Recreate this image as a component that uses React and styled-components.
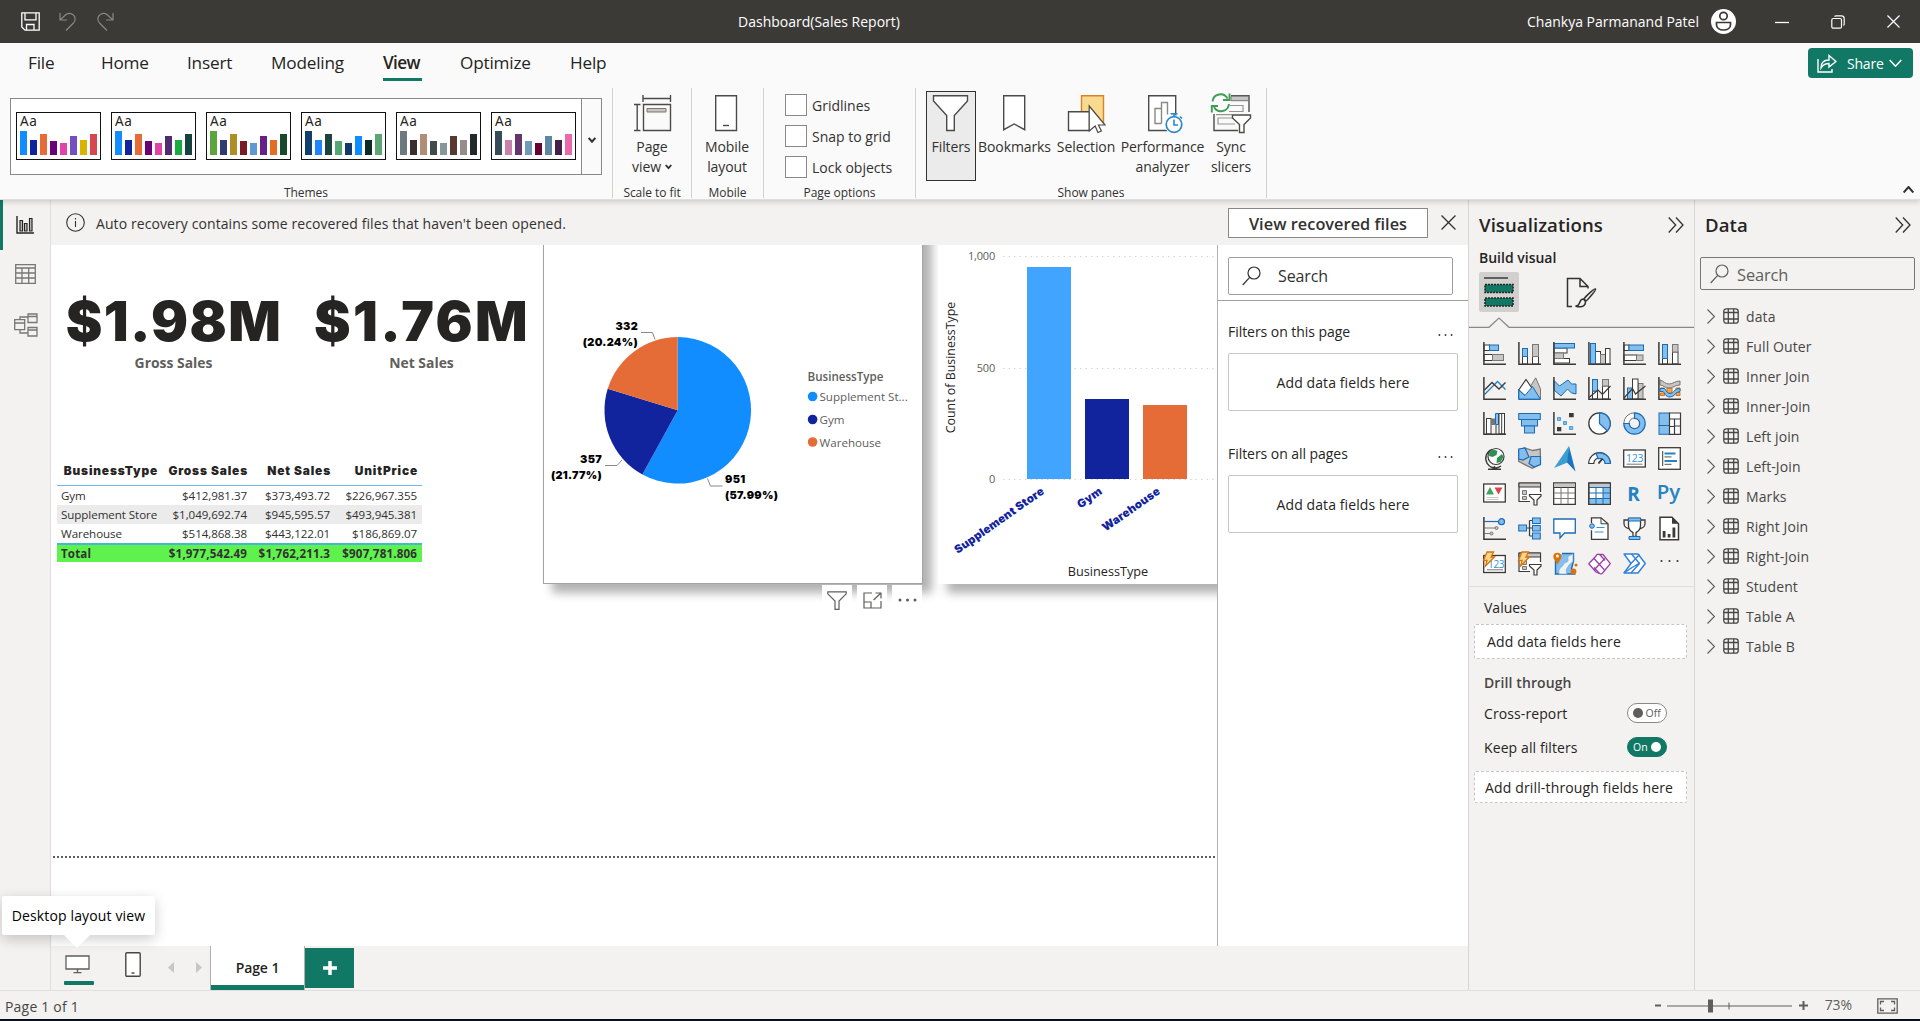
import React from "react";
import styled, { createGlobalStyle, css } from "styled-components";

const UI = `"Open Sans", "Noto Sans", sans-serif`;
const BLACK = `"Inter", "Liberation Sans", sans-serif`;
const GREEN = "#117865";

const Global = createGlobalStyle`
  * { box-sizing: border-box; }
  html, body { margin: 0; padding: 0; }
  body { font-family: ${UI}; color: #252423; font-size: 14px; overflow: hidden; }
  svg { display: block; flex: none; }
  svg text { font-family: ${UI}; }
`;

const Window = styled.div`
  width: 1920px;
  height: 1021px;
  display: flex;
  flex-direction: column;
  background: #f3f2f1;
  overflow: hidden;
`;

/* ---------- title bar ---------- */
const TitleBar = styled.header`
  height: 43px;
  flex: none;
  background: #3b3a37;
  color: #fff;
  display: grid;
  grid-template-columns: 1fr auto 1fr;
  align-items: center;
  font-size: 14px;
  letter-spacing: 0;
`;
const QuickAccess = styled.div`
  display: flex;
  align-items: center;
  gap: 19px;
  padding-left: 21px;
`;
const DocTitle = styled.div`
  padding-right: 282px;
  white-space: nowrap;
`;
const Account = styled.div`
  display: flex;
  align-items: center;
  justify-content: flex-end;
  padding-right: 20px;
  white-space: nowrap;
`;
const Avatar = styled.div`
  margin: 0 39px 0 12px;
`;
const WinButtons = styled.div`
  display: flex;
  align-items: center;
  gap: 42px;
`;

/* ---------- ribbon ---------- */
const Ribbon = styled.div`
  height: 157px;
  flex: none;
  background: #fafafa;
  border-bottom: 1px solid #e1dfdd;
  box-shadow: 0 2px 5px rgba(0, 0, 0, 0.16);
  position: relative;
  z-index: 3;
  display: flex;
  flex-direction: column;
`;
const TabRow = styled.nav`
  height: 45px;
  flex: none;
  display: flex;
  align-items: flex-start;
  justify-content: space-between;
  padding: 5px 7px 0 28px;
`;
const Tabs = styled.div`
  display: flex;
`;
const Tab = styled.div`
  width: ${(p) => p.$w}px;
  margin-right: ${(p) => p.$gap}px;
  height: 33px;
  padding-top: 3px;
  font-size: 17.2px;
  line-height: 24px;
  white-space: nowrap;
  letter-spacing: ${(p) => (p.$active ? "-0.6px" : "-0.2px")};
  font-weight: ${(p) => (p.$active ? 600 : 400)};
  border-bottom: 3px solid ${(p) => (p.$active ? GREEN : "transparent")};
`;
const ShareButton = styled.button`
  width: 105px;
  height: 30px;
  border: 0;
  border-radius: 4px;
  background: ${GREEN};
  color: #fff;
  font: 14px ${UI};
  letter-spacing: -0.2px;
  display: flex;
  align-items: center;
  padding: 0 10px 0 9px;
  gap: 9px;
  span { margin: 0 -4px 0 1px; }
`;
const Groups = styled.div`
  display: flex;
  height: 110px;
`;
const Group = styled.section`
  width: ${(p) => p.$w}px;
  border-right: 1px solid #d2d0ce;
  display: flex;
  flex-direction: column;
  align-items: center;
`;
const GroupBody = styled.div`
  height: 96px;
  width: 100%;
  display: flex;
  justify-content: ${(p) => p.$justify || "center"};
  padding: ${(p) => p.$pad || "0"};
`;
const GroupLabel = styled.div`
  font-size: 12px;
  line-height: 14px;
  height: 14px;
  flex: none;
  margin: 1px 0 -1px;
  padding-top: 1px;
  letter-spacing: -0.05px;
  white-space: nowrap;
  color: #323130;
`;
const Gallery = styled.div`
  width: 592px;
  height: 77px;
  border: 1px solid #8a8886;
  background: #fff;
  display: flex;
`;
const GalleryList = styled.div`
  flex: 1;
  display: flex;
  gap: 10px;
  padding: 13px 0 0 5px;
`;
const GalleryMore = styled.div`
  width: 20px;
  border-left: 1px solid #8a8886;
  background: #fafafa;
  display: flex;
  align-items: center;
  justify-content: center;
  padding-top: 6px;
`;
const Thumb = styled.div`
  width: 85px;
  height: 48px;
  border: 1px solid #111;
  background: #fff;
  padding: 2px 3px 4px;
  display: flex;
  flex-direction: column;
  justify-content: space-between;
`;
const ThumbText = styled.div`
  font-family: "Noto Sans", ${UI};
  font-size: 13.5px;
  line-height: 13px;
  height: 14px;
  letter-spacing: 0.6px;
  font-weight: 400;
`;
const ThumbBars = styled.div`
  display: flex;
  gap: 3px;
  align-items: flex-end;
`;
const ThumbBar = styled.i`
  width: 7px;
  height: ${(p) => p.$h}px;
  background: ${(p) => p.$c};
`;
const BigButton = styled.div`
  width: ${(p) => p.$w}px;
  height: 90px;
  display: flex;
  flex-direction: column;
  align-items: center;
  text-align: center;
  border: 1px solid transparent;
  font-size: 14px;
  line-height: 20px;
  letter-spacing: -0.1px;
  white-space: nowrap;
  color: #323130;
  ${(p) => p.$on && css`border-color: #323130; background: #ebebeb;`}
  svg.big { margin-bottom: 5px; overflow: visible; }
`;
const InlineLabel = styled.span`
  display: inline-flex;
  align-items: center;
  gap: 4px;
`;
const CheckList = styled.div`
  display: flex;
  flex-direction: column;
  gap: 11px;
  padding-top: 7px;
`;
const Check = styled.label`
  display: flex;
  align-items: center;
  gap: 5px;
  height: 20px;
  font-size: 14px;
  letter-spacing: 0;
  white-space: nowrap;
  color: #323130;
  &::before {
    content: "";
    width: 20px;
    height: 20px;
    border: 1px solid #8a8886;
    background: #fff;
  }
`;
const Collapse = styled.div`
  margin-left: auto;
  align-self: flex-end;
  padding: 0 6px 5px 0;
`;

/* ---------- main area ---------- */
const Main = styled.div`
  height: 790px;
  flex: none;
  display: flex;
`;
const Rail = styled.aside`
  width: 51px;
  border-right: 1px solid #e1dfdd;
  display: flex;
  flex-direction: column;
`;
const RailItem = styled.div`
  height: ${(p) => p.$h || 50}px;
  border-left: 3px solid ${(p) => (p.$on ? GREEN : "transparent")};
  display: flex;
  align-items: center;
  padding-left: ${(p) => p.$pad || 12}px;
`;
const Center = styled.div`
  width: 1417px;
  display: flex;
  flex-direction: column;
`;
const Notice = styled.div`
  height: 45px;
  flex: none;
  display: flex;
  align-items: center;
  padding: 0 12px 0 15px;
  font-size: 14px;
  color: #323130;
`;
const NoticeText = styled.div`
  flex: 1;
  margin-left: 11px;
  letter-spacing: 0.09px;
  padding-top: 1px;
`;
const RecoverButton = styled.button`
  width: 200px;
  height: 30px;
  border: 1px solid #8a8886;
  background: #fff;
  font: 600 16.3px ${UI};
  letter-spacing: 0.05px;
  color: #323130;
  margin-right: 13px;
  padding: 2px 0 0;
`;
const Stage = styled.div`
  height: 701px;
  flex: none;
  display: flex;
`;
const Canvas = styled.div`
  width: 1166px;
  position: relative;
  overflow: hidden;
  background: #fff;
`;
const Visual = styled.div`
  position: absolute;
  left: ${(p) => p.$x}px;
  top: ${(p) => p.$y}px;
  width: ${(p) => p.$w}px;
`;
const CardVisual = styled(Visual)`
  display: flex;
  flex-direction: column;
  align-items: center;
`;
const CardValue = styled.div`
  font: 900 55px/60px ${BLACK};
  letter-spacing: ${(p) => p.$ls}px;
  white-space: nowrap;
  color: #252423;
`;
const CardLabel = styled.div`
  font-size: 13.9px;
  line-height: 20px;
  font-weight: 700;
  letter-spacing: 0;
  color: #605e5c;
  margin: 2px 1px 0 0;
`;
const ChartCard = styled(Visual)`
  height: 399px;
  padding-top: ${(p) => (p.$selected ? 59 : 60)}px;
  background: #fff;
  border: ${(p) => (p.$selected ? "1px solid #a6a4a2" : "0")};
  box-shadow: 9px 9px 9px rgba(0, 0, 0, 0.3);
`;
const VisualTools = styled.div`
  position: absolute;
  left: 771px;
  top: 340px;
  display: flex;
  gap: 5px;
`;
const VisualTool = styled.div`
  width: 30px;
  height: 30px;
  background: linear-gradient(#fff 60%, transparent);
  display: flex;
  align-items: center;
  justify-content: center;
`;
const PageEdge = styled.div`
  position: absolute;
  left: 2px;
  right: 0;
  top: 611px;
  height: 2px;
  background: repeating-linear-gradient(90deg, #605e5c 0 2px, transparent 2px 4px);
`;

const Matrix = styled.table`
  border-collapse: separate;
  border-spacing: 0;
  table-layout: fixed;
  width: 365px;
  font-size: 11.6px;
  letter-spacing: -0.07px;
  color: #323130;
  td, th { padding: 0 5px 0 4px; text-align: right; white-space: nowrap; }
  td:first-child { text-align: left; }
  th {
    font: 900 11.9px ${BLACK};
    letter-spacing: 0.85px;
    height: 33px;
    padding: 2px 4px 0 0;
    border-bottom: 1px solid #76b5ec;
    color: #252423;
  }
  td { height: 19px; line-height: 18px; }
`;
const MatrixRow = styled.tr`
  background: ${(p) => (p.$alt ? "#ebebeb" : "transparent")};
`;
const TotalRow = styled.tr`
  background: #5ff24e;
  font-weight: 700;
  letter-spacing: 0.15px;
  td { border-top: 2px solid #41b8d5; height: 19px; line-height: 16px; }
`;

/* ---------- filter pane ---------- */
const FilterPane = styled.aside`
  width: 251px;
  background: #fff;
  border-left: 1px solid #b3b0ad;
`;
const FilterSearchRow = styled.div`
  height: 56px;
  border-bottom: 1px solid #a19f9d;
  padding: 12px 0 0 10px;
`;
const SearchBox = styled.div`
  width: ${(p) => p.$w}px;
  height: ${(p) => p.$h}px;
  border: 1px solid ${(p) => p.$bc};
  border-radius: 2px;
  display: flex;
  align-items: center;
  padding-left: ${(p) => p.$pad}px;
  gap: ${(p) => p.$gap}px;
  font-size: ${(p) => p.$fs || 16}px;
  letter-spacing: -0.1px;
  color: ${(p) => p.$color};
  span { padding-top: 1px; }
`;
const FilterSection = styled.section`
  padding: 19px 10px 0;
  height: 122px;
`;
const FilterHead = styled.div`
  height: 22px;
  display: flex;
  justify-content: space-between;
  align-items: center;
  padding-right: 5px;
  font-size: 14px;
  letter-spacing: -0.05px;
  svg { margin-top: 8px; }
`;
const FilterDrop = styled.div`
  margin-top: 11px;
  width: 230px;
  height: 58px;
  border: 1px solid #c8c6c4;
  border-radius: 2px;
  display: flex;
  align-items: center;
  justify-content: center;
  font-size: 14px;
  letter-spacing: 0.1px;
`;

/* ---------- page bar ---------- */
const PageBar = styled.div`
  height: 44px;
  flex: none;
  display: flex;
  padding-left: 13px;
`;
const DesktopView = styled.div`
  position: relative;
  width: 30px;
  height: 39px;
  padding: 9px 0 0 1px;
  z-index: 4;
  &::before {
    content: "";
    position: absolute;
    inset: auto 0 0 0;
    height: 4px;
    border-radius: 1px;
    background: ${GREEN};
  }
`;
const Tooltip = styled.div`
  position: absolute;
  left: -62px;
  top: -50px;
  width: 153px;
  height: 39px;
  background: #fff;
  border-radius: 2px;
  box-shadow: 0 4px 14px rgba(0, 0, 0, 0.2);
  display: flex;
  align-items: center;
  justify-content: center;
  white-space: nowrap;
  font-size: 14px;
  letter-spacing: 0.14px;
  color: #000;
  &::after {
    content: "";
    position: absolute;
    top: 39px;
    left: 62px;
    border: 13px solid transparent;
    border-top-color: #fff;
    border-bottom: 0;
  }
`;
const PhoneView = styled.div`
  margin: 6px 0 0 31px;
`;
const PageArrows = styled.div`
  display: flex;
  gap: 22px;
  padding: 15px 8px 0 27px;
`;
const PageTab = styled.div`
  width: 95px;
  height: 44px;
  background: #fff;
  border: solid #b3b0ad;
  border-width: 0 1px;
  box-shadow: inset 0 -5px 0 ${GREEN};
  font-size: 14px;
  font-weight: 600;
  letter-spacing: -0.1px;
  padding-bottom: 1px;
  display: flex;
  align-items: center;
  justify-content: center;
`;
const AddPage = styled.div`
  width: 49px;
  height: 40px;
  margin-top: 2px;
  background: ${GREEN};
  display: flex;
  align-items: center;
  justify-content: center;
`;

/* ---------- side panes ---------- */
const SidePane = styled.aside`
  width: 226px;
  border-left: 1px solid #d8d6d4;
`;
const PaneHead = styled.div`
  height: 46px;
  display: flex;
  align-items: center;
  justify-content: space-between;
  padding: 3px ${(p) => p.$r}px 0 10px;
  font-size: 18.6px;
  font-weight: 600;
  letter-spacing: 0.05px;
`;
const BuildLabel = styled.div`
  padding-left: 10px;
  height: 26px;
  line-height: 23px;
  font-size: 14px;
  font-weight: 600;
  letter-spacing: 0;
`;
const ModeRow = styled.div`
  display: flex;
  gap: 42px;
  padding-left: 10px;
`;
const ModeButton = styled.div`
  width: 40px;
  height: 40px;
  border-radius: 2px;
  background: ${(p) => (p.$on ? "#d2d0ce" : "transparent")};
  display: flex;
  align-items: center;
  justify-content: center;
`;
const Gallery6 = styled.div`
  display: grid;
  grid-template-columns: repeat(6, 23px);
  gap: 12px;
  padding: 14px 0 11px 14px;
  border-bottom: 1px solid #e1dfdd;
`;
const More = styled.div`
  display: flex;
  align-items: center;
  justify-content: center;
  padding-bottom: 5px;
`;
const FieldWell = styled.section`
  padding: 10px 6px 0 5px;
`;
const WellLabel = styled.div`
  padding-left: 10px;
  height: ${(p) => p.$h || 22}px;
  line-height: 22px;
  font-size: 14px;
  font-weight: ${(p) => (p.$bold ? 600 : 400)};
  letter-spacing: ${(p) => (p.$bold ? "0.1px" : "0")};
  color: ${(p) => (p.$bold ? "#484644" : "#252423")};
`;
const Well = styled.div`
  width: 213px;
  height: ${(p) => p.$h}px;
  margin: ${(p) => p.$m};
  border: 1px dashed #c8c6c4;
  border-radius: 2px;
  background: #fff;
  padding: 0 0 0 ${(p) => p.$pad}px;
  display: flex;
  align-items: center;
  font-size: 14px;
  letter-spacing: 0.15px;
  white-space: nowrap;
`;
const ToggleRow = styled.div`
  height: 34px;
  padding: 0 21px 0 10px;
  display: flex;
  align-items: center;
  justify-content: space-between;
  font-size: 14px;
  letter-spacing: 0.1px;
`;
const Toggle = styled.div`
  width: 40px;
  height: 20px;
  border-radius: 10px;
  border: 1px solid ${(p) => (p.$on ? GREEN : "#8a8886")};
  background: ${(p) => (p.$on ? GREEN : "#fff")};
  color: ${(p) => (p.$on ? "#fff" : "#605e5c")};
  display: flex;
  flex-direction: ${(p) => (p.$on ? "row-reverse" : "row")};
  align-items: center;
  justify-content: space-between;
  padding: 0 5px;
  font-size: 10.5px;
  line-height: 19px;
  &::before {
    content: "";
    width: 10px;
    height: 10px;
    border-radius: 50%;
    background: ${(p) => (p.$on ? "#fff" : "#605e5c")};
  }
`;
const DataSearch = styled.div`
  padding: 11px 0 11px 5px;
`;
const TableRow = styled.div`
  height: 30px;
  display: flex;
  align-items: center;
  padding-left: 12px;
  font-size: 14px;
  letter-spacing: 0.1px;
  color: #484644;
  svg:first-child { margin-right: 8px; }
  svg + svg { margin-right: 7px; }
`;

/* ---------- status bar ---------- */
const StatusBar = styled.footer`
  height: 31px;
  border-top: 1px solid #e1dfdd;
  border-bottom: 2px solid #05101c;
  padding: 2px 22px 0 5px;
  display: flex;
  align-items: center;
  justify-content: space-between;
  font-size: 14px;
  letter-spacing: 0.2px;
  color: #484644;
`;
const Zoom = styled.div`
  display: flex;
  align-items: center;
  color: #605e5c;
  letter-spacing: -0.1px;
`;
const ZoomValue = styled.span`
  margin: 0 25px 3px 17px;
  line-height: 20px;
`;

/* ---------- icon primitives ---------- */
const D = "#3b3a39";
const BS = "#1a6cb5";
const BF = "#83beec";
const GS = "#797775";
const GF = "#c8c6c4";

const Box = ({ x, y, r, b, k = "w" }) => {
  const c = { w: ["#fff", D], b: [BF, BS], g: [GF, GS] }[k];
  return <rect x={x} y={y} width={r - x} height={b - y} fill={c[0]} stroke={c[1]} />;
};
const Axis = () => <path d="M.9 0V22.2H23" fill="none" stroke={D} strokeWidth="1.5" />;
const Frame = ({ y = 2, b = 21 }) => <rect x=".7" y={y} width="21.6" height={b - y} fill="#fff" stroke={D} strokeWidth="1.3" />;
const SlicerBase = () => (
  <>
    <path d="M12 19.5H1V1h21.5v9" fill="#fff" stroke={D} strokeWidth="1.2" />
    <path d="M1 1h21.5v4H1z" fill={GF} stroke={D} />
    <path d="M4.5 8.5h4v4h-4zM4.5 14.5h4v3h-4z" fill={GF} stroke={GS} />
    <path d="M11.5 12.5H23V14l-4 4v5h-3v-5l-4.500-4z" fill="#fff" stroke={D} strokeWidth="1.2" />
  </>
);
const Bolt = () => <path d="M4 0h6.500L8 5h3.500L2.500 14 4 8.500H.5z" fill="#fcd58b" stroke="#d8730d" strokeWidth="1.3" />;

const VISUAL_ICONS = [
  <><Box x={1} y={3} r={6.5} b={8.5} /><Box x={6.5} y={3} r={15.5} b={8.5} k="b" /><Box x={1} y={12.5} r={9.5} b={18.5} /><Box x={9.5} y={12.5} r={20.5} b={18.5} k="g" /><Axis /></>,
  <><Box x={4.5} y={14.5} r={9.5} b={22} /><Box x={4.5} y={6.5} r={9.5} b={14.5} k="b" /><Box x={14.5} y={14.5} r={20.5} b={22} /><Box x={14.5} y={2.5} r={20.5} b={14.5} k="g" /><Axis /></>,
  <><Box x={1} y={16.5} r={16.5} b={21} /><Box x={1} y={6} r={14} b={11} /><Box x={1} y={11} r={10.5} b={16.5} k="g" /><Box x={1} y={1.5} r={21.5} b={6} k="b" /><Axis /></>,
  <><Box x={7.5} y={9.5} r={12.5} b={22} /><Box x={12.5} y={12.5} r={17.5} b={22} k="g" /><Box x={17.5} y={6.5} r={22} b={22} /><Box x={2.5} y={1.5} r={7.5} b={22} k="b" /><Axis /></>,
  <><Box x={1} y={3} r={6} b={8.5} /><Box x={6} y={3} r={20.5} b={8.5} k="b" /><Box x={1} y={13} r={13.5} b={18.5} /><Box x={13.5} y={13} r={20} b={18.5} k="g" /><Axis /></>,
  <><Box x={4.5} y={16.5} r={9.5} b={22} /><Box x={4.5} y={2.5} r={9.5} b={16.5} k="b" /><Box x={14.5} y={10} r={20} b={22} /><Box x={14.5} y={2.5} r={20} b={10} k="g" /><Axis /></>,

  <><path d="M1.500 17.500 14.500 4.500l8 8" fill="none" stroke="#2383c4" strokeWidth="1.4" /><path d="M1.500 13 9 5.500l7 6.500 6.500-6.500" fill="none" stroke={D} strokeWidth="1.4" /><Axis /></>,
  <><path d="M12 10 17.700.8 22.500 12v10z" fill={GF} stroke={GS} /><path d="M.7 13 8 2.500 18 17 7 19z" fill="#fff" stroke={D} strokeWidth="1.2" /><path d="M.7 13 7 18.500 14.500 9.500 22.500 22.300H.7z" fill={BF} stroke={BS} /><path d="M.7 12V22.300H22.500" fill="none" stroke={BS} /></>,
  <><path d="M1 3.500 6.500 9l8.500-6 3.500 4H23v10l-4.500-1-4-4L8 19 1 13z" fill={BF} stroke={BS} /><Axis /></>,
  <><Box x={4.5} y={14} r={9.5} b={22} /><Box x={4.5} y={2.5} r={9.5} b={14} k="b" /><Box x={14.5} y={9} r={20.5} b={22} /><Box x={14.5} y={2.5} r={20.5} b={9} k="g" /><path d="M1 20.500 10 13l4.500 4.500 8-8.500" fill="none" stroke={D} strokeWidth="1.2" /><Axis /></>,
  <><Box x={4.5} y={11} r={9.5} b={22} k="b" /><Box x={15} y={6.5} r={20} b={22} k="g" /><Box x={9.5} y={2} r={15} b={22} /><path d="M1 21 9.500 11.500l3 5.500 10-8" fill="none" stroke={D} strokeWidth="1.2" /><Axis /></>,
  <><path d="M2.500 11h4v3h-4zM2.500 16h4v2.500h-4zM18 11h4v3h-4zM18 15.500h4v3h-4zM9 11h5v5H9z" fill="#f8a54a" stroke="#d8730d" /><path d="M2 3c4 1 5 4 9 4s6-3 11-3v4c-5 0-7 3-11 3S6 8.500 2 8z" fill={GF} stroke={GS} /><path d="M2 11.500h4c2 0 2 5 6 5s4-5 10-5v3c-5 0-5 5.500-10 5.500S7 15.500 5 14.500H2z" fill={BF} stroke={BS} /><Axis /></>,

  <><Box x={3.5} y={6.5} r={8} b={22} /><path d="M8 6.500h4v6.500H8z" fill={GS} /><path d="M12.500 1.500h3v11h-3z" fill={BF} stroke={BS} /><Box x={16} y={1.5} r={21.5} b={22} /><path d="M13 13v9M18.700 2v20" stroke={D} /><Axis /></>,
  <><Box x={0.7} y={1.5} r={22.3} b={7.5} k="b" /><Box x={3.5} y={7.5} r={19.5} b={14} k="b" /><Box x={6.5} y={14} r={16.5} b={21} k="b" /></>,
  <><path d="M4.500 5.500h3v3h-3zM10.500 9.500h3v3h-3zM16.500 14.500h3.200v3h-3.200z" fill={BF} stroke="#4a9ade" /><path d="M16 1h4.700v4.300H16zM4 15h4.300v4.300H4z" fill={D} /><Axis /></>,
  <><circle cx="11.5" cy="11.5" r="10.7" fill="#fff" stroke={D} strokeWidth="1.3" /><path d="M11.500.8a10.700 10.700 0 0 1 7.800 18l-7.800-7.300z" fill={BF} stroke={BS} strokeWidth="1.2" /></>,
  <><circle cx="11.5" cy="11.5" r="8" fill="none" stroke={BF} strokeWidth="5.5" /><path d="M11.500.8V6A5.500 5.500 0 0 0 6 11.500H.8A10.700 10.700 0 0 1 11.500.8z" fill="#fff" stroke={GS} /><path d="M11.500.8A10.700 10.700 0 1 1 .8 11.500H6.300a5.200 5.200 0 1 0 5.200-5.200z" fill="none" stroke={BS} strokeWidth="1.2" /></>,
  <><Box x={1} y={1} r={11.5} b={13.5} k="b" /><Box x={1} y={13.5} r={11.5} b={22.3} k="b" /><path d="M11.500 1h11v21.300h-11zM11.500 7h11M16.500 7v15.300M11.500 14.500h5M16.500 14h6" fill="#fff" stroke={D} strokeWidth="1.2" /></>,

  <><path d="M9 2.500a9.500 9.500 0 1 0 9 16.500M11.500 19v3M5 22.200h13" fill="none" stroke={D} strokeWidth="1.4" /><circle cx="13" cy="9.5" r="8" fill="#fff" stroke={D} strokeWidth="1.2" /><path d="m6.500 5 4-2.500 4 1.500-1 4-4 2-3.500-1zM14 11l5-4 1.500 3-3 5-4 1z" fill="#2f9150" /></>,
  <><path d="m.7 3 6-2 8 2.500 7.600-1.500v15l-8 4.300-6-3-7.600-4z" fill={GF} stroke={GS} strokeWidth="1.3" /><path d="M.7 2 7 1l4 9-6 3-4.300-1zM13 9.500h9.500v8L16 20l-5-3.500z" fill={BF} stroke={BS} strokeWidth="1.2" /></>,
  <><path d="M16-1 1 21l13.500-5.500z" fill="#3a9fd0" /><path d="m16-1-2 16.500 8.500 9z" fill="#1b74bf" /></>,
  <><path d="M.7 16.500a10.800 10.800 0 0 1 21.600 0h-5a5.600 5.600 0 0 0-11.500 0z" fill="#fff" stroke={D} strokeWidth="1.2" /><path d="M8 6.500A10.800 10.800 0 0 1 22.300 16.500h-5a5.600 5.600 0 0 0-7-4.800z" fill={BF} stroke={BS} strokeWidth="1.2" /><path d="m10.500 16.500 4-5" stroke={D} strokeWidth="2" /></>,
  <><Frame y={3} b={20} /><path d="M3.500 17.200h16" stroke={GS} /><text x="3" y="14.5" fontSize="10.5" fill="#3392d4" letterSpacing="-.3">123</text></>,
  <><rect x=".7" y=".7" width="21.6" height="21.6" fill="#fff" stroke={D} strokeWidth="1.3" /><path d="M4.700 4v15" stroke={D} /><path d="M6.500 6.500h11M6.500 14h12.500" stroke="#2383c4" strokeWidth="2.2" /><path d="M6.500 9.800h7M6.500 17.300h7" stroke={GS} strokeWidth="1.2" /></>,

  <><Frame y={2} b={20} /><path d="m3 12.500 4-7.500 4 7.500z" fill="#3fa35c" /><path d="m11.500 5.500h8l-4 7z" fill="#e04345" /><path d="M3.500 15.500h12M3.500 17.500h12" stroke={GF} /></>,
  <SlicerBase />,
  <><path d="M.7 1h21.600v21.300H.7z" fill="#fff" stroke={D} strokeWidth="1.3" /><path d="M1 1.500h21v4H1z" fill={GF} /><path d="M1 5.500h21" stroke={D} /><path d="M1 11h21M1 16.500h21M8 5.500v16.500M15 5.500v16.500" stroke={GS} /></>,
  <><path d="M.7 1h21.600v21.300H.7z" fill="#fff" stroke={D} strokeWidth="1.3" /><path d="M1 1.500h21v4H1z" fill={GF} /><path d="M15 5.500h7v16.500H1.500v-5.500H15z" fill={BF} /><path d="M1 11h21M1 16.500h21M8 5.500v16.500M15 5.500v16.500M1 5.500h21" stroke={BS} /><path d="M1 1h21.300v21.300H1z" fill="none" stroke={D} /></>,
  <text x="4.3" y="18.5" fontSize="19" fontWeight="700" fill="#2383c4">R</text>,
  <text x="-1.3" y="16.8" fontSize="20.5" fontWeight="600" fill="#2383c4">Py</text>,

  <><path d="M1.500 4.500h14" stroke={BS} strokeWidth="1.2" /><circle cx="18.5" cy="4.7" r="3" fill={BF} stroke={BS} strokeWidth="1.2" /><path d="M1.500 11h10.500M1.500 16.500h6" stroke={GS} strokeWidth="1.2" /><circle cx="13.5" cy="11" r="1.5" fill={GF} stroke={GS} /><circle cx="8.5" cy="16.5" r="1.5" fill={GF} stroke={GS} /><Axis /></>,
  <><path d="M8.500 11h7M11.500 3.500v15.500M11.500 3.500h3M11.500 19h3" fill="none" stroke={D} strokeWidth="1.2" /><Box x={0.7} y={8} r={8.5} b={14} k="b" /><Box x={14.5} y={1} r={22.3} b={6.5} k="b" /><Box x={14.5} y={8.5} r={22.3} b={14} k="b" /><Box x={14.5} y={16} r={22.3} b={22} k="b" /></>,
  <path d="M.8 2h21.500v14H11.500L7 21v-5H.8z" fill="#fff" stroke={BS} strokeWidth="1.3" />,
  <><path d="M3.500 6V.8h9.500l7 6v15.500H3.500v-9" fill="#fff" stroke={D} strokeWidth="1.3" /><path d="M13 .8v6h7" fill="none" stroke={D} /><circle cx="4" cy="9" r="2.3" fill={BF} stroke={BS} /><path d="M8.500 10.500h8M6.500 15h9" stroke="#3392d4" strokeWidth="1.2" /></>,
  <><path d="M5.500 3H1v3.500C1 9.500 3.500 11.500 6.500 11.500M17.500 3H22v3.500c0 3-2.500 5-5.500 5" fill="none" stroke={D} strokeWidth="1.3" /><path d="M5.500 1.500h12v7c0 5-3 6-4.500 7v4h-3v-4c-1.500-1-4.500-2-4.500-7z" fill="#fff" stroke={D} strokeWidth="1.3" /><path d="M5.500 1h12v3h-12zM6 19.500h11v3H6z" fill={BF} stroke={BS} /></>,
  <><path d="M2 .3h12l6.500 6.500v16H2z" fill="#fff" stroke={D} strokeWidth="1.5" /><path d="M14 .3v6.500h6.500z" fill={D} /><path d="M4.700 14h2.800v6.500H4.700zM9.700 17h2.800v3.500H9.700zM14.500 10.500h2.800v10h-2.800z" fill={D} /></>,

  <><Frame y={3.5} b={20.5} /><path d="M4 17.800h16" stroke={GS} /><text x="5" y="15.5" fontSize="10" fill="#3392d4" letterSpacing="-.3">123</text><Bolt /></>,
  <><SlicerBase /><Bolt /></>,
  <><path d="M2.500 8V22h19l-3-5 2-8V1.500H9" fill={BF} stroke={BS} strokeWidth="1.4" /><path d="M6 22c-1-7 3-6 4-9s6-2 5-6 3-3 5-5.500v8L16 13l-3 5 1 4z" fill="#f3f2f1" stroke="#6aaee6" strokeWidth=".7" /><path d="M4.500 12.500C2 8 .3 7 .3 4A4.200 4.200 0 0 1 8.500 4C8.500 7 7 8 4.500 12.500z" fill="#dd7108" /><circle cx="4.4" cy="4" r="1.5" fill="#fff" /><circle cx="20.5" cy="19.5" r="2.9" fill="#dd7108" /><circle cx="23" cy="13" r="1.6" fill="#dd7108" /></>,
  <g fill="#fff" stroke="#9b3fa9" strokeWidth="1.3" strokeLinejoin="round"><path d="M.8 11.700 8 4a2.500 2.500 0 0 1 3.500-1.500L15 2.500l7.300 9.200L15 20.500a2.500 2.500 0 0 1-3.500 1L8 20z" /><path d="m6 6.500 10.500 11.500M17 6.500 6 18M11.500 2.300 17 8.500M11.500 21.500l-5.500-6" fill="none" /></g>,
  <g fill="#fff" stroke="#2f7fdc" strokeWidth="1.4" strokeLinejoin="round"><path d="M1 2h14l7.300 9.500L15 21H1l7-9.500z" /><path d="m8 11.500 8.500-9M1 21l8-5.500 7-4M8.500 2l8 9.500L8 21" fill="none" /></g>,
];

const VisualIcon = ({ children }) => (
  <svg width="23" height="23" viewBox="0 0 23 23" overflow="visible">{children}</svg>
);

const Dots = ({ w = 15, r = 0.9, c = "#323130" }) => (
  <svg width={w} height="4" viewBox={`0 0 ${w} 4`} fill={c}>
    <circle cx={r + 0.5} cy="2" r={r} /><circle cx={w / 2} cy="2" r={r} /><circle cx={w - r - 0.5} cy="2" r={r} />
  </svg>
);
const Chevrons = () => (
  <svg width="16" height="16" viewBox="0 0 16 16" fill="none" stroke="#323130" strokeWidth="1.3"><path d="m.7.500 7 7.500-7 7.500M8 .500l7 7.500L8 15.500" /></svg>
);
const Caret = ({ w = 8, s = 2, up, c = "#323130" }) => (
  <svg width={w} height={w / 2 + 2} viewBox={`0 0 ${w} ${w / 2 + 2}`} fill="none" stroke={c} strokeWidth={s}>
    <path d={up ? `M.7 ${w / 2 + 1} ${w / 2} 1 ${w - 0.7} ${w / 2 + 1}` : `M.7 1 ${w / 2} ${w / 2 + 0.7} ${w - 0.7} 1`} />
  </svg>
);
const Lens = ({ c = "#323130" }) => (
  <svg width="19" height="20" viewBox="0 0 19 20" fill="none" stroke={c} strokeWidth="1.2"><circle cx="12" cy="7" r="6" /><path d="M7.700 11.300.7 19" /></svg>
);
const Cross = ({ s, c, w = 1.2 }) => (
  <svg width={s} height={s} viewBox="0 0 14 14" stroke={c} strokeWidth={w}><path d="m.5.500 13 13M13.500.500l-13 13" /></svg>
);

/* ---------- ribbon data ---------- */
const TABS = [["File", 27, 46], ["Home", 48, 38], ["Insert", 43, 41], ["Modeling", 74, 38], ["View", 39, 38], ["Optimize", 71, 39], ["Help", 40, 0]];
const BAR_HEIGHTS = [24, 15, 21, 14, 12, 19, 15, 21];
const THEMES = [
  ["#118dff", "#12239e", "#e66c37", "#6b007b", "#e044a7", "#744ec2", "#d9b300", "#d64550"],
  ["#118dff", "#12239e", "#e66c37", "#6b007b", "#e044a7", "#4e2b73", "#1aab40", "#15443f"],
  ["#5aa63c", "#2f3a72", "#ad8e27", "#7a1a28", "#5f98d4", "#67208a", "#e66c24", "#17492c"],
  ["#113f6e", "#2084ff", "#1b433f", "#55a673", "#0f3a6b", "#0d8dff", "#0c2a26", "#5ba673"],
  ["#6c7a80", "#3a2d2d", "#b08d74", "#404b4d", "#84979b", "#5a382f", "#938e89", "#22292b"],
  ["#374c5a", "#c881ab", "#65366c", "#6f9ab8", "#650430", "#5d86a0", "#43204a", "#ea68ac"],
];

const ICON = { className: "big", width: 40, height: 40, viewBox: "0 0 40 40", fill: "none", stroke: "#4b4a48", strokeWidth: 1.4 };

const PageViewIcon = () => (
  <svg {...ICON}><path d="M11 3v7M38.500 3v7M11 6.500h27.500M2 12.500h6.500M2 38.500h6.500M5.200 12.500v26M11.500 12.500h27v26h-27z" /><path d="M15 16.500h19v3.500H15z" fill={GF} stroke="#797775" strokeWidth="1" /></svg>
);
const MobileIcon = () => (
  <svg {...ICON}><path d="M8.700 3.700h20.800v34.800H8.700z" fill="#fff" /><path d="M16 33.500h6" /></svg>
);
const FiltersIcon = () => (
  <svg {...ICON}><path d="M2.500 3.700h34V9L23.300 23.500v15h-7.600v-15L2.500 9z" fill="#fff" /></svg>
);
const BookmarkIcon = () => (
  <svg {...ICON}><path d="M8.700 3.700h21v34L19.200 32 8.700 37.700z" fill="#fff" /></svg>
);
const SelectionIcon = () => (
  <svg {...ICON}><path d="M15.500 3.700h22V30h-22z" fill="#f8db8f" stroke="#d8822a" /><path d="M2.500 19.700h21v18.800h-21z" fill="#fff" /><path d="M23.200 14v25l6-5 2.700 6.500 3.500-1.500-3-6H39z" fill="#fff" strokeWidth="1.2" /></svg>
);
const PerformanceIcon = () => (
  <svg {...ICON}><path d="M5.700 3.700h27V38.500h-27z" fill="#fff" /><path d="M18.500 31.500H12v-15h6.500M18.500 31.500V10.500h6v12" stroke="#8a8886" /><circle cx="31" cy="32.5" r="9.5" fill="#fafafa" stroke="none" /><circle cx="31" cy="32.5" r="7.8" fill="#fff" stroke="#2b88c9" strokeWidth="1.7" /><path d="M31 27.500v5.500h4M27.500 21.700h7M31 21.700v3M37 24.500l2 2" stroke="#2b88c9" strokeWidth="1.6" /></svg>
);
const SyncIcon = () => (
  <svg {...ICON}>
    <path d="M20 3.700h18V20M3 22v16.500h24" /><path d="M20 4.200h17.500v4.500H20z" fill={GF} stroke="#797775" strokeWidth="1" /><path d="M19 13.500h13v6H18M5 22.700h16M23 26H7v6h17" stroke="#979593" strokeWidth="1.2" />
    <path d="M1.500 9.500A8 8 0 0 1 16.500 6.500M18.500 1.500v6.500H12M18 12a8 8 0 0 1-15 3M.8 20.500V14H7" stroke="#3f9b57" strokeWidth="1.9" />
    <path d="M21.500 23h18v3l-6.500 6.500v8h-4.500v-8L21.500 26z" fill="#fff" />
  </svg>
);

/* ---------- report data ---------- */
const ROWS = [
  ["Gym", "$412,981.37", "$373,493.72", "$226,967.355"],
  ["Supplement Store", "$1,049,692.74", "$945,595.57", "$493,945.381"],
  ["Warehouse", "$514,868.38", "$443,122.01", "$186,869.07"],
];
const TABLES = ["data", "Full Outer", "Inner Join", "Inner-Join", "Left join", "Left-Join", "Marks", "Right Join", "Right-Join", "Student", "Table A", "Table B"];

const BlackText = styled.text`
  && { font-family: ${BLACK}; font-weight: 900; }
`;

const PieChart = () => (
  <svg width="377" height="337" viewBox="544 245 377 337">
    <g transform="translate(677.7 410.3)">
      <path d="M0-73.300A73.300 73.300 0 1 1-35.300 64.200L0 0z" fill="#118dff" />
      <path d="M-35.300 64.200A73.300 73.300 0 0 1-70-21.500L0 0z" fill="#12239e" />
      <path d="M-70-21.500A73.300 73.300 0 0 1 0-73.300V0z" fill="#e66c37" />
    </g>
    <path d="M641 332.500h11.500l2.500 7M605 465.500h12l5-5.500M707.500 478.500l3 7.500h12" fill="none" stroke="#8a8886" />
    <g fontSize="10.9" fill="#000" letterSpacing=".3">
      <g textAnchor="end">
        <BlackText x="638" y="330">332</BlackText><BlackText x="638" y="346">(20.24%)</BlackText>
        <BlackText x="602" y="463">357</BlackText><BlackText x="602" y="479">(21.77%)</BlackText>
      </g>
      <BlackText x="725" y="483">951</BlackText><BlackText x="725" y="499">(57.99%)</BlackText>
    </g>
    <g fontSize="11.6" fill="#605e5c">
      <text x="807.5" y="381" fontWeight="600">BusinessType</text>
      <text x="819.5" y="401">Supplement St...</text><text x="819.5" y="424">Gym</text><text x="819.5" y="447">Warehouse</text>
    </g>
    <circle cx="812.6" cy="396.5" r="4.8" fill="#118dff" /><circle cx="812.6" cy="419.5" r="4.8" fill="#12239e" /><circle cx="812.6" cy="442" r="4.8" fill="#e66c37" />
  </svg>
);

const BarChart = () => (
  <svg width="279" height="338" viewBox="938 245 279 338">
    <path d="M1003 256.500h212M1003 368.500h212M1003 479.500h212" stroke="#d8d6d4" strokeDasharray="1.5 4" />
    <path d="M1027 267h44v212h-44z" fill="#41a4ff" /><path d="M1085 399h44v80h-44z" fill="#12239e" /><path d="M1143 405h44v74h-44z" fill="#e66c37" />
    <g fontSize="11" fill="#605e5c" textAnchor="end" letterSpacing="-.2"><text x="995" y="260">1,000</text><text x="995" y="372">500</text><text x="995" y="483">0</text></g>
    <g fontSize="12.7" fill="#252423" textAnchor="middle"><text transform="translate(955 367.5) rotate(-90)" fontSize="12.4">Count of BusinessType</text><text x="1108" y="576">BusinessType</text></g>
    <g fontSize="11.4" fill="#12239e" textAnchor="end" letterSpacing=".25">
      <BlackText transform="translate(1045 493) rotate(-35)">Supplement Store</BlackText>
      <BlackText transform="translate(1103 493) rotate(-35)">Gym</BlackText>
      <BlackText transform="translate(1161 493) rotate(-35)">Warehouse</BlackText>
    </g>
  </svg>
);

export default function App() {
  return (
    <Window>
      <Global />
      <TitleBar>
        <QuickAccess>
          <svg width="19" height="19" viewBox="0 0 19 19" fill="none" stroke="#fff" strokeWidth="1.3"><path d="M.8.800h17.400v17.400H4L.8 15zM4 .800v7h11v-7M5.500 18v-5.500h7.500V18" /></svg>
          <svg width="18" height="19" viewBox="0 0 18 19" fill="none" stroke="#8a8886" strokeWidth="1.2"><path d="M1 1v7h7M1 8l6-5.500C11-.5 17 3 16 8c-.3 1.500-1 2.500-2 3.500L7 18.500" /></svg>
          <svg width="18" height="19" viewBox="0 0 18 19" fill="none" stroke="#8a8886" strokeWidth="1.2"><path d="M17 1v7h-7M17 8l-6-5.500C7-.5 1 3 2 8c.3 1.500 1 2.500 2 3.500l7 7" /></svg>
        </QuickAccess>
        <DocTitle>Dashboard(Sales Report)</DocTitle>
        <Account>
          Chankya Parmanand Patel
          <Avatar>
            <svg width="25" height="25" viewBox="0 0 25 25"><circle cx="12.5" cy="12.5" r="12.5" fill="#fff" /><g fill="none" stroke="#3b3a37" strokeWidth="1.7"><circle cx="12.5" cy="7" r="3.7" /><path d="M5.500 13.500h14v2.500c0 3-3 5-7 5s-7-2-7-5z" /></g></svg>
          </Avatar>
          <WinButtons>
            <svg width="14" height="14" viewBox="0 0 14 14" stroke="#fff"><path d="M0 7.500h14" strokeWidth="1.3" /></svg>
            <svg width="14" height="14" viewBox="0 0 14 14" stroke="#fff" fill="none" strokeWidth="1.2"><rect x=".8" y="3.5" width="9.7" height="9.7" rx="1.5" /><path d="M3.500 1.500c.5-.5 1-.7 1.500-.7h5.500a2.700 2.700 0 0 1 2.700 2.700V9c0 .5-.2 1-.7 1.500" /></svg>
            <Cross s={13} c="#fff" w={1.3} />
          </WinButtons>
        </Account>
      </TitleBar>

      <Ribbon>
        <TabRow>
          <Tabs>
            {TABS.map(([t, w, g]) => <Tab key={t} $w={w} $gap={g} $active={t === "View"}>{t}</Tab>)}
          </Tabs>
          <ShareButton>
            <svg width="20" height="19" viewBox="0 0 20 19" fill="none" stroke="#fff" strokeWidth="1.4"><path d="M1 5v13h14v-3M4 14c0-5 3-8 8-8V1.500L19 7.500l-7 5.500V9.500c-4 0-6 1-8 4.500z" /></svg>
            <span>Share</span>
            <Caret w={13} s={1.5} c="#fff" />
          </ShareButton>
        </TabRow>
        <Groups>
          <Group $w={613}>
            <GroupBody $justify="flex-start" $pad="10px 0 0 10px">
              <Gallery>
                <GalleryList>
                  {THEMES.map((colors, i) => (
                    <Thumb key={i}>
                      <ThumbText>Aa</ThumbText>
                      <ThumbBars>{colors.map((c, j) => <ThumbBar key={j} $c={c} $h={BAR_HEIGHTS[j]} />)}</ThumbBars>
                    </Thumb>
                  ))}
                </GalleryList>
                <GalleryMore><Caret /></GalleryMore>
              </Gallery>
            </GroupBody>
            <GroupLabel>Themes</GroupLabel>
          </Group>
          <Group $w={79}>
            <GroupBody $pad="3px 0 0"><BigButton $w={70}><PageViewIcon />Page<InlineLabel>view <Caret w={7} s={1.8} /></InlineLabel></BigButton></GroupBody>
            <GroupLabel>Scale to fit</GroupLabel>
          </Group>
          <Group $w={72}>
            <GroupBody $pad="3px 1px 0 0"><BigButton $w={60}><MobileIcon />Mobile<br />layout</BigButton></GroupBody>
            <GroupLabel>Mobile</GroupLabel>
          </Group>
          <Group $w={152}>
            <GroupBody $justify="flex-start" $pad="0 0 0 21px">
              <CheckList><Check>Gridlines</Check><Check>Snap to grid</Check><Check>Lock objects</Check></CheckList>
            </GroupBody>
            <GroupLabel>Page options</GroupLabel>
          </Group>
          <Group $w={351}>
            <GroupBody $justify="flex-start" $pad="3px 0 0 10px">
              <BigButton $w={50} $on><FiltersIcon />Filters</BigButton>
              <BigButton $w={77}><BookmarkIcon />Bookmarks</BigButton>
              <BigButton $w={66}><SelectionIcon />Selection</BigButton>
              <BigButton $w={87}><PerformanceIcon />Performance<br />analyzer</BigButton>
              <BigButton $w={50}><SyncIcon />Sync<br />slicers</BigButton>
            </GroupBody>
            <GroupLabel>Show panes</GroupLabel>
          </Group>
          <Collapse><Caret w={11} s={2} up /></Collapse>
        </Groups>
      </Ribbon>

      <Main>
        <Rail>
          <RailItem $on $pad={13}>
            <svg width="18" height="18" viewBox="0 0 18 18" fill="none" stroke="#252423" strokeWidth="1.4"><path d="M1 0v17h17" /><path d="M4 4.500h2.500V15H4zM8.500 7.500H11V15H8.500zM13.500 2.500H16V15h-2.500z" fill="#c8c6c4" strokeWidth="1.2" /></svg>
          </RailItem>
          <RailItem $h={48}>
            <svg width="21" height="20" viewBox="0 0 21 20" fill="none" stroke="#797775" strokeWidth="1.3"><path d="M.7.700h19.600v18.600H.7zM.7 4h19.600M.7 9h19.600M.7 14h19.600M7 4v15M13.700 4v15" /></svg>
          </RailItem>
          <RailItem $h={54} $pad={11}>
            <svg width="24" height="24" viewBox="0 0 24 24" fill="none" stroke="#797775" strokeWidth="1.3"><path d="M.7 6.700h10v10h-10zM.7 10h10M14 1h9v8.500h-9zM14 3.500h9M14 14.500h9V23h-9zM14 17h9M6 6.500V4h8M6 17v3h8" /></svg>
          </RailItem>
        </Rail>

        <Center>
          <Notice>
            <svg width="19" height="19" viewBox="0 0 19 19" fill="none" stroke="#323130" strokeWidth="1.1"><circle cx="9.5" cy="9.5" r="8.8" /><path d="M9.500 8v6M9.500 5v1.500" /></svg>
            <NoticeText>Auto recovery contains some recovered files that haven't been opened.</NoticeText>
            <RecoverButton>View recovered files</RecoverButton>
            <Cross s={15} c="#323130" />
          </Notice>

          <Stage>
            <Canvas>
              <CardVisual $x={10} $y={46} $w={226}><CardValue $ls={1.4}>$1.98M</CardValue><CardLabel>Gross Sales</CardLabel></CardVisual>
              <CardVisual $x={258} $y={46} $w={226}><CardValue $ls={2.4}>$1.76M</CardValue><CardLabel>Net Sales</CardLabel></CardVisual>
              <Visual $x={6} $y={208} $w={365}>
                <Matrix>
                  <colgroup><col width="105" /><col width="90" /><col width="83" /><col width="87" /></colgroup>
                  <thead><tr><th>BusinessType</th><th>Gross Sales</th><th>Net Sales</th><th>UnitPrice</th></tr></thead>
                  <tbody>
                    {ROWS.map((r, i) => <MatrixRow key={r[0]} $alt={i === 1}>{r.map((c) => <td key={c}>{c}</td>)}</MatrixRow>)}
                    <TotalRow><td>Total</td><td>$1,977,542.49</td><td>$1,762,211.3</td><td>$907,781.806</td></TotalRow>
                  </tbody>
                </Matrix>
              </Visual>
              <ChartCard $x={492} $y={-60} $w={380} $selected><PieChart /></ChartCard>
              <ChartCard $x={887} $y={-60} $w={300}><BarChart /></ChartCard>
              <VisualTools>
                <VisualTool><svg width="20" height="19" viewBox="0 0 20 19" fill="none" stroke="#605e5c" strokeWidth="1.2"><path d="M.8.800h18.400v2L12 10v8.300H8V10L.8 2.800z" /></svg></VisualTool>
                <VisualTool><svg width="19" height="17" viewBox="0 0 19 17" fill="none" stroke="#605e5c" strokeWidth="1.2"><path d="M9 1H1v15h17V9M1 10h7v6M10.500 8 17.500 1.500M12.500 1H18v5.500" /></svg></VisualTool>
                <VisualTool><Dots w={19} r={1.5} c="#605e5c" /></VisualTool>
              </VisualTools>
              <PageEdge />
            </Canvas>

            <FilterPane>
              <FilterSearchRow>
                <SearchBox $w={225} $h={38} $bc="#a19f9d" $pad={13} $gap={17} $color="#323130"><Lens />Search</SearchBox>
              </FilterSearchRow>
              <FilterSection>
                <FilterHead>Filters on this page<Dots /></FilterHead>
                <FilterDrop>Add data fields here</FilterDrop>
              </FilterSection>
              <FilterSection>
                <FilterHead>Filters on all pages<Dots /></FilterHead>
                <FilterDrop>Add data fields here</FilterDrop>
              </FilterSection>
            </FilterPane>
          </Stage>

          <PageBar>
            <DesktopView>
              <svg width="25" height="19" viewBox="0 0 25 19" fill="#fff" stroke="#605e5c" strokeWidth="1.3"><path d="M1 1h23v13H1zM12.500 14v3.500M8.500 17.700h8" /></svg>
              <Tooltip>Desktop layout view</Tooltip>
            </DesktopView>
            <PhoneView>
              <svg width="16" height="25" viewBox="0 0 16 25" fill="#fff" stroke="#484644" strokeWidth="1.4"><rect x=".8" y=".8" width="14.4" height="23.4" rx="1" /><path d="M6.500 21h3" /></svg>
            </PhoneView>
            <PageArrows>
              <svg width="6" height="13" viewBox="0 0 6 13" fill="#c8c6c4"><path d="M6 1v11L0 6.500z" /></svg>
              <svg width="6" height="13" viewBox="0 0 6 13" fill="#c8c6c4"><path d="M0 1v11l6-5.500z" /></svg>
            </PageArrows>
            <PageTab>Page 1</PageTab>
            <AddPage><svg width="14" height="14" viewBox="0 0 14 14"><path d="M7 0v14M0 7h14" stroke="#fff" strokeWidth="3.5" /></svg></AddPage>
          </PageBar>
        </Center>

        <SidePane>
          <PaneHead $r={10}>Visualizations<Chevrons /></PaneHead>
          <BuildLabel>Build visual</BuildLabel>
          <ModeRow>
            <ModeButton $on>
              <svg width="30" height="30" viewBox="0 0 30 30"><path d="M0 1h24" stroke="#252423" strokeWidth="1.3" /><path d="M1 7.500h28v8H1zM1 21h28v8H1z" fill={GREEN} stroke="#252423" strokeWidth="1.6" strokeDasharray="2 1" /></svg>
            </ModeButton>
            <ModeButton>
              <svg width="31" height="31" viewBox="0 0 31 31" fill="none" stroke="#323130" strokeWidth="1.5"><path d="M6 29.500H1.500V1.500H14l8 8v2M14 1.500v8h8" /><path d="M29.500 12c1 1-8 11-9.500 12l-2-2c1-2 10.500-11 11.500-10zM17.500 22c-3 0-3 1.500-4 4-.7 2-2.500 3-4 3 4 1.500 10 1.500 10-4.500z" fill="#f3f2f1" /></svg>
            </ModeButton>
          </ModeRow>
          <svg width="225" height="16" viewBox="0 0 225 16" fill="none" stroke="#8a8886" strokeWidth="1.2"><path d="M0 15.300h20L30 6l10 9.300h185" /></svg>
          <Gallery6>
            {VISUAL_ICONS.map((icon, i) => <VisualIcon key={i}>{icon}</VisualIcon>)}
            <More><Dots w={19} r={1} /></More>
          </Gallery6>
          <FieldWell>
            <WellLabel>Values</WellLabel>
            <Well $h={35} $m="5px 0 13px" $pad={12}>Add data fields here</Well>
            <WellLabel $bold $h={24}>Drill through</WellLabel>
            <ToggleRow>Cross-report<Toggle>Off</Toggle></ToggleRow>
            <ToggleRow>Keep all filters<Toggle $on>On</Toggle></ToggleRow>
            <Well $h={32} $m="7px 0 0" $pad={10}>Add drill-through fields here</Well>
          </FieldWell>
        </SidePane>

        <SidePane>
          <PaneHead $r={9}>Data<Chevrons /></PaneHead>
          <DataSearch>
            <SearchBox $w={215} $h={33} $bc="#797775" $pad={9} $gap={8} $fs={16.4} $color="#605e5c"><Lens c="#605e5c" /><span>Search</span></SearchBox>
          </DataSearch>
          {TABLES.map((t) => (
            <TableRow key={t}>
              <svg width="8" height="15" viewBox="0 0 8 15" fill="none" stroke="#605e5c" strokeWidth="1.2"><path d="m.5.500 7 7-7 7" /></svg>
              <svg width="16" height="16" viewBox="0 0 16 16" fill="none" stroke="#484644" strokeWidth="1.3"><rect x=".8" y=".8" width="14.4" height="14.4" rx="2.5" /><path d="M.8 4.500h14.400M.8 11h14.400M5.300.800v14.400M10.700.800v14.400" /></svg>
              {t}
            </TableRow>
          ))}
        </SidePane>
      </Main>

      <StatusBar>
        <span>Page 1 of 1</span>
        <Zoom>
          <svg width="154" height="16" viewBox="0 0 154 16" stroke="#605e5c"><path d="M1 7.500h6M145 7.500h9M149.500 3v9" strokeWidth="2" /><path d="M13 8h125" /><path d="M75 4.500v7" /><path d="M56.500 1.500v13" strokeWidth="5" /></svg>
          <ZoomValue>73%</ZoomValue>
          <svg width="21" height="16" viewBox="0 0 21 16" fill="none" stroke="#605e5c" strokeWidth="1.3"><path d="M.8.800h19.400v14.400H.8z" /><path d="M3.500 6.500v-3H7M14 3.500h3.500v3M3.500 9.500v3H7M14 12.500h3.500v-3" /></svg>
        </Zoom>
      </StatusBar>
    </Window>
  );
}
